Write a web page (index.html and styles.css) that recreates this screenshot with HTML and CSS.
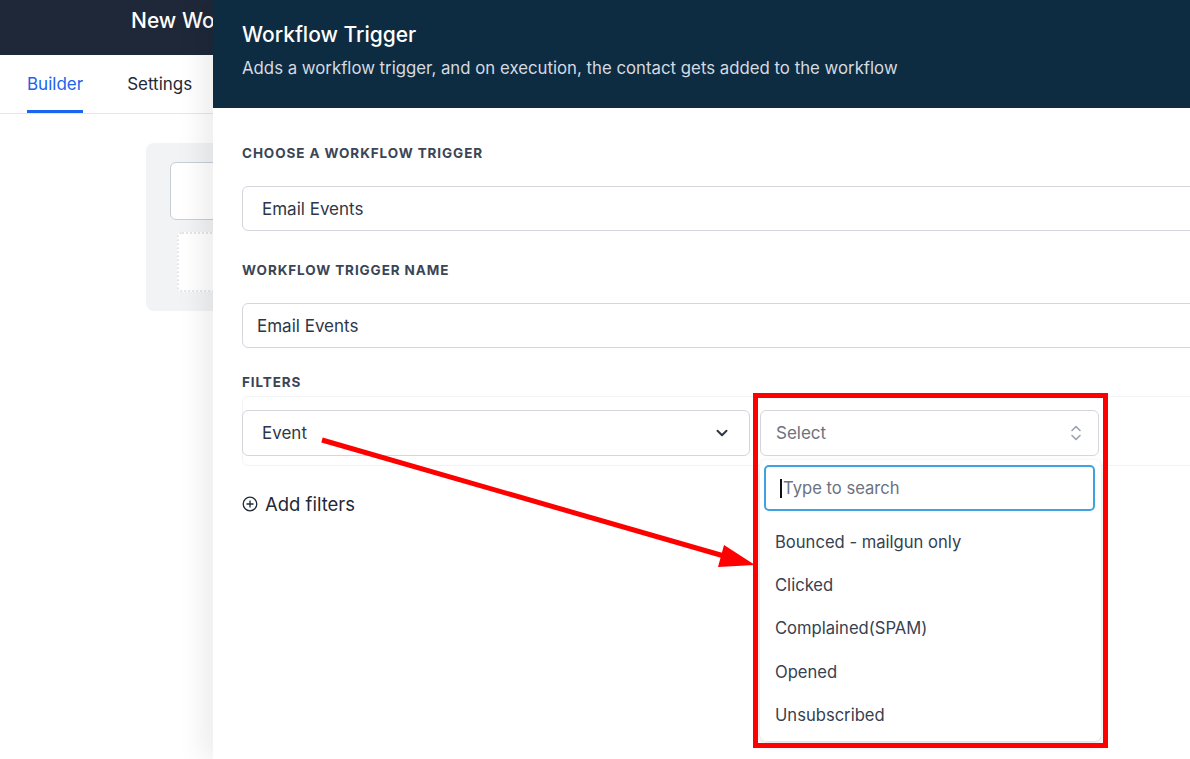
FILE: index.html
```html
<!DOCTYPE html>
<html lang="en">
<head>
<meta charset="utf-8">
<title>Workflow Trigger</title>
<link rel="stylesheet" href="styles.css">
</head>
<body>
<div class="page">
  <header class="topbar"><span class="topbar-title">New Workflow</span></header>
  <nav class="tabs">
    <span class="tab active">Builder</span>
    <span class="tab">Settings</span>
  </nav>
  <div class="canvas">
    <div class="canvas-box">
      <div class="canvas-card"></div>
      <div class="canvas-dotted"></div>
    </div>
  </div>
</div>

<aside class="drawer">
  <div class="drawer-head">
    <h1 class="drawer-title">Workflow Trigger</h1>
    <p class="drawer-sub">Adds a workflow trigger, and on execution, the contact gets added to the workflow</p>
  </div>
  <div class="drawer-body">
    <div class="label first">CHOOSE A WORKFLOW TRIGGER</div>
    <div class="field field-trigger">Email Events</div>
    <div class="label">WORKFLOW TRIGGER NAME</div>
    <div class="field field-name">Email Events</div>
    <div class="label label-filters">FILTERS</div>
    <div class="filter-box">
      <div class="select select-event">
        <span>Event</span>
        <svg class="chev" width="14" height="14" viewBox="0 0 14 14"><path d="M2.5 4.8 L7 9.2 L11.5 4.8" fill="none" stroke="#2d3748" stroke-width="2" stroke-linecap="round" stroke-linejoin="round"/></svg>
      </div>
      <div class="select-wrap">
        <div class="select select-value">
          <span class="placeholder">Select</span>
          <svg class="updown" width="12" height="20" viewBox="0 0 12 20"><path d="M2 7.5 L6 3.5 L10 7.5" fill="none" stroke="#9ca3af" stroke-width="1.6" stroke-linecap="round" stroke-linejoin="round"/><path d="M2 12.5 L6 16.5 L10 12.5" fill="none" stroke="#9ca3af" stroke-width="1.6" stroke-linecap="round" stroke-linejoin="round"/></svg>
        </div>
        <div class="menu">
          <div class="search"><span class="caret"></span><span class="search-ph">Type to search</span></div>
          <ul class="options">
            <li>Bounced - mailgun only</li>
            <li>Clicked</li>
            <li>Complained(SPAM)</li>
            <li>Opened</li>
            <li>Unsubscribed</li>
          </ul>
        </div>
      </div>
    </div>
    <div class="add-filters">
      <svg width="16" height="16" viewBox="0 0 16 16"><circle cx="8" cy="8" r="6.8" fill="none" stroke="#1f2937" stroke-width="1.3"/><path d="M8 4.5 V11.5 M4.5 8 H11.5" stroke="#1f2937" stroke-width="1.3"/></svg>
      <span>Add filters</span>
    </div>
  </div>
</aside>

<div class="annot-box"></div>
<svg class="annot-arrow" width="1190" height="759" viewBox="0 0 1190 759">
  <line x1="322" y1="440" x2="724" y2="556" stroke="#ff0000" stroke-width="5"/>
  <polygon points="755,565 718,567 724,545" fill="#ff0000"/>
</svg>
</body>
</html>
```

FILE: styles.css
```css
* { box-sizing: border-box; }
html, body { margin: 0; padding: 0; }
body {
  width: 1190px;
  height: 759px;
  overflow: hidden;
  position: relative;
  background: #ffffff;
  font-family: Inter, "Noto Sans", "Liberation Sans", sans-serif;
  color: #2d3748;
}

/* background page */
.page { width: 213px; overflow: hidden; }
.topbar {
  width: 1190px;
  height: 55px;
  background: #1e2839;
  padding: 8px 0 0 131px;
}
.topbar-title {
  display: block;
  width: 82px;
  overflow: hidden;
  color: #ffffff;
  font-size: 21px;
  line-height: 26px;
  font-weight: 500;
  white-space: nowrap;
}
.tabs {
  width: 1190px;
  height: 59px;
  display: flex;
  gap: 44px;
  padding-left: 27px;
  border-bottom: 1px solid #e5e7eb;
}
.tab {
  font-size: 17px;
  color: #1f2937;
  display: flex;
  align-items: center;
  height: 58px;
  border-bottom: 3px solid transparent;
  padding-top: 3px;
}
.tab.active { color: #1d63ed; border-bottom-color: #1a66f0; }
.canvas { padding: 29px 0 0 146px; }
.canvas-box {
  width: 200px;
  height: 168px;
  background: #f2f3f5;
  border-radius: 8px;
  padding: 19px 0 0 24px;
}
.canvas-card {
  height: 58px;
  background: #ffffff;
  border: 1px solid #c6ced6;
  border-radius: 6px;
}
.canvas-dotted {
  margin: 12px 0 0 7px;
  height: 60px;
  background: #ffffff;
  border: 2px dotted #e3e5e8;
  border-radius: 5px;
}

/* drawer */
.drawer {
  position: absolute;
  left: 213px;
  top: 0;
  width: 1000px;
  height: 759px;
  background: #ffffff;
  box-shadow: -12px 0 24px rgba(0, 0, 0, 0.07);
}
.drawer-head {
  height: 108px;
  background: #0e2c41;
  padding: 22px 29px 0;
}
.drawer-title {
  margin: 0;
  font-size: 21px;
  font-weight: 500;
  color: #ffffff;
  line-height: 26px;
}
.drawer-sub {
  margin: 10px 0 0;
  font-size: 16.8px;
  line-height: 20px;
  color: #d5dae0;
}
.drawer-body { padding: 0 0 0 29px; }
.label {
  font-size: 13.5px;
  font-weight: 700;
  letter-spacing: 0.9px;
  color: #3a4556;
  line-height: 16px;
  margin-top: 31px;
}
.label.first { margin-top: 37px; }
.label.label-filters { margin-top: 26px; }
.field {
  margin-top: 25px;
  height: 45px;
  border: 1px solid #d3d6dd;
  border-radius: 6px;
  display: flex;
  align-items: center;
  font-size: 17px;
  color: #2d3748;
}
.field-trigger { padding-left: 19px; }
.field-name { padding-left: 14px; }
.filter-box {
  margin-top: 6px;
  border: 1px solid #f2f3f5;
  border-radius: 6px;
  padding: 13px 0 9px;
  display: flex;
  gap: 10px;
}
.select {
  height: 46px;
  border: 1px solid #d3d6dd;
  border-radius: 6px;
  display: flex;
  align-items: center;
  justify-content: space-between;
  font-size: 17px;
  color: #2d3748;
  background: #ffffff;
}
.select-event { width: 508px; padding: 0 20px 0 19px; margin-left: -1px; }
.chev { display: block; }
.select-wrap { position: relative; width: 339px; }
.select-value { width: 339px; padding: 0 16px 0 15px; }
.placeholder { color: #6b7280; }
.updown { display: block; }
.menu {
  position: absolute;
  left: 0;
  top: 50px;
  width: 341px;
  height: 281px;
  background: #ffffff;
  border-radius: 6px;
  box-shadow: 0 4px 10px rgba(0, 0, 0, 0.12), 0 0 2px rgba(0, 0, 0, 0.06);
  padding: 5px 6px 0 4px;
  z-index: 2;
}
.search {
  height: 46px;
  border: 2px solid #3ea2e2;
  border-radius: 5px;
  display: flex;
  align-items: center;
  padding-left: 14px;
  font-size: 16.6px;
}
.caret { width: 2px; height: 19px; background: #111111; margin-right: 1px; }
.search-ph { color: #6b7280; }
.options {
  list-style: none;
  margin: 9px 0 0;
  padding: 0;
}
.options li {
  height: 43.3px;
  display: flex;
  align-items: center;
  padding-left: 11px;
  font-size: 16.6px;
  color: #374151;
}
.add-filters {
  margin-top: 27px;
  display: flex;
  align-items: center;
  gap: 7px;
  font-size: 18.5px;
  color: #1f2937;
}
.add-filters svg { display: block; }

/* annotations */
.annot-box {
  position: absolute;
  left: 753px;
  top: 393px;
  width: 355px;
  height: 355px;
  border: 5px solid #ff0000;
  z-index: 5;
}
.annot-arrow {
  position: absolute;
  left: 0;
  top: 0;
  z-index: 6;
  pointer-events: none;
}
```
